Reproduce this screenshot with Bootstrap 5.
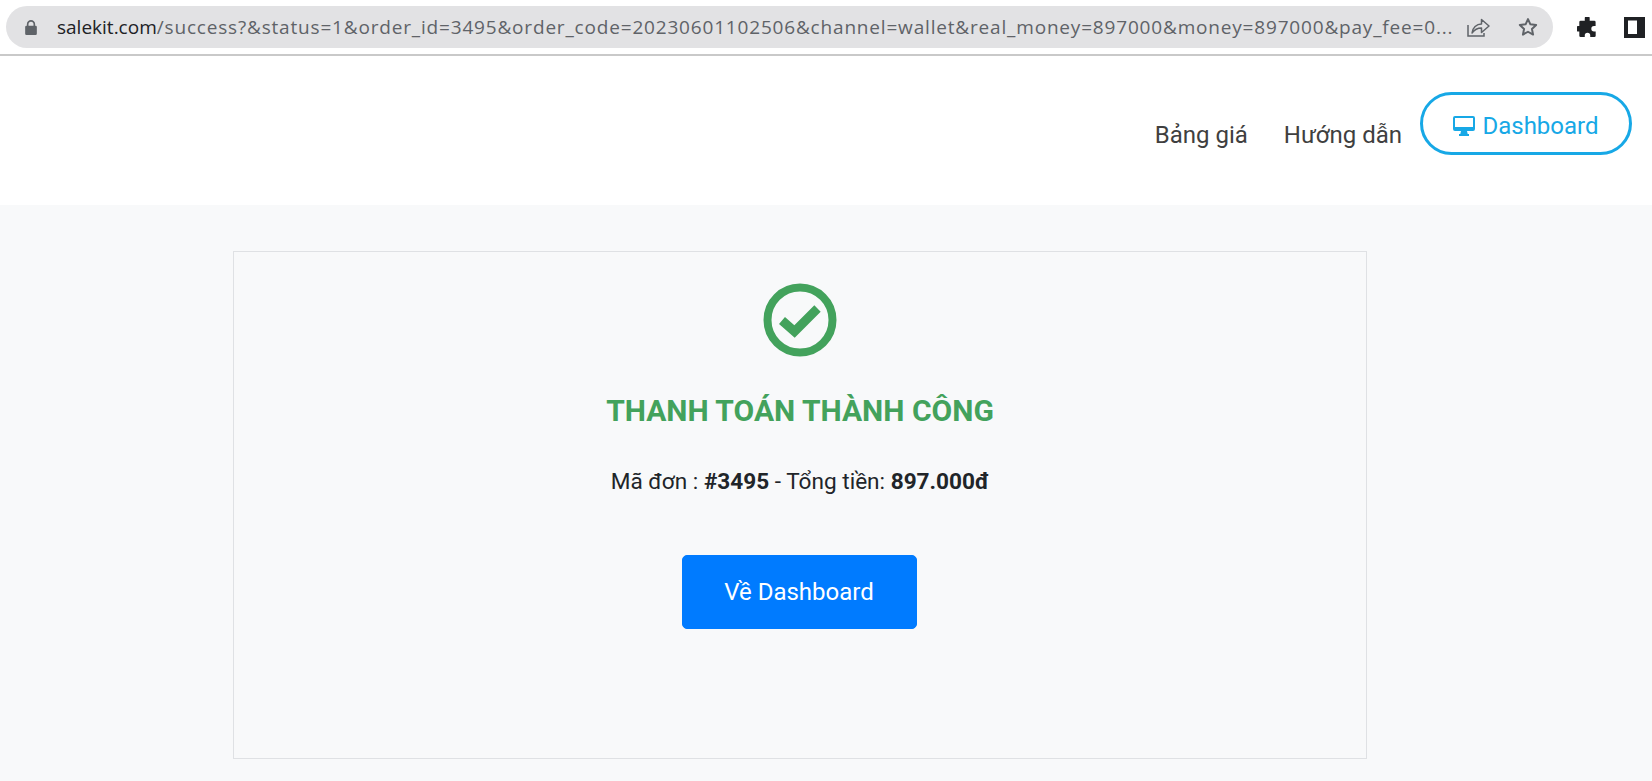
<!DOCTYPE html>
<html lang="vi">

<head>
  <title>Thanh toán thành công</title>
  <meta charset="UTF-8">
  <link href="https://cdn.jsdelivr.net/npm/bootstrap@5.3.3/dist/css/bootstrap.min.css" rel="stylesheet">
  <style>
    html, body { height: 100%; }
    body { font-family: Roboto, "Liberation Sans", sans-serif; background: #f8f9fa; color: #212529; overflow: hidden; }

    /* browser chrome */
    .chrome-bar { height: 56px; background: #fff; border-bottom: 2px solid #c9c9c9; padding: 6px 0 0 6px; }
    .url-pill { width: 1547px; height: 42px; background: #e2e2e4; border-radius: 21px; padding: 0 16px 0 19px; }
    .url-text { font-family: "Open Sans", "Noto Sans", sans-serif; font-size: 19px; letter-spacing: .82px; color: #5f6368; white-space: nowrap; overflow: hidden; width: 1400px; margin-left: 20px; }
    .url-text b { font-weight: 400; color: #202124; letter-spacing: 0; }
    .share-ico { margin-left: 10px; }
    .star-ico { margin-left: 28px; }
    .ext-icons { gap: 26px; margin-left: 24px; }

    /* site header */
    .site-head { height: 149px; background: #fff; padding: 36px 20px 0 0; }
    .site-link { font-size: 24px; color: #3f3f3f; text-decoration: none; margin-top: 23px; }
    .gap-link { margin-right: 36px; }
    .pill-btn { width: 212px; height: 63px; border: 3px solid #17a8e6; border-radius: 32px; color: #17a8e6; font-size: 24px; background: #fff; gap: 7px; text-decoration: none; margin-left: 18px; padding-top: 4px; }

    /* result panel */
    .result-wrap { padding-top: 46px; }
    .result-panel { width: 1134px; height: 508px; margin-left: 233px; border: 1px solid #dfe1e4; padding-top: 31px; background: #f8f9fa; border-radius: 0; }
    .result-title { font-size: 30px; font-weight: 700; color: #43a25c; margin: 34px 0 0; line-height: 40px; }
    .result-line { font-size: 22.6px; margin: 35px 0 0; line-height: 32px; }
    .result-line b { font-weight: 700; }
    .back-btn { width: 235px; height: 74px; margin-top: 57px; margin-right: 2px; font-size: 24px; background: #007bff; border-color: #007bff; border-radius: 5px; }
  </style>
</head>

<body>
  <div class="chrome-bar d-flex align-items-start">
    <div class="url-pill d-flex align-items-center">
      <svg class="flex-shrink-0" width="12" height="15" viewBox="0 0 14 18" fill="#5f6368"><path d="M2 7V5a5 5 0 0 1 10 0v2h.5A1.500 1.500 0 0 1 14 8.500v8a1.500 1.500 0 0 1-1.500 1.500h-11A1.500 1.500 0 0 1 0 16.500v-8A1.500 1.500 0 0 1 1.500 7zm2 0h6V5a3 3 0 0 0-6 0z"/></svg>
      <div class="url-text flex-shrink-0"><b>salekit.com</b>/success?&amp;status=1&amp;order_id=3495&amp;order_code=20230601102506&amp;channel=wallet&amp;real_money=897000&amp;money=897000&amp;pay_fee=0...</div>
      <svg class="share-ico flex-shrink-0" width="23" height="20" viewBox="0 0 23 20" fill="none" stroke="#5f6368" stroke-width="1.500"><path d="M1 8v11h16v-3"/><path d="M5 16c.6-5.500 4.500-9 9.500-9V2.500L22 9l-7.500 6.500V11c-4 0-7 1.500-9.500 5z" stroke-linejoin="round"/></svg>
      <svg class="star-ico flex-shrink-0" width="20" height="20" viewBox="0 0 24 24" fill="none" stroke="#5f6368" stroke-width="2.400" stroke-linejoin="round"><path d="M12 2.500l2.900 6.300 6.900.8-5.100 4.700 1.400 6.800L12 17.700l-6.100 3.400 1.400-6.800-5.100-4.700 6.900-.8z"/></svg>
    </div>
    <div class="ext-icons d-flex align-items-center" style="height:42px">
      <svg width="21" height="20" viewBox="0 0 22 22" fill="#1f2124"><path d="M8 1.500a2.700 2.700 0 0 1 5.400 0V4h5a1.500 1.500 0 0 1 1.500 1.500V10h-1.700a3 3 0 0 0 0 6H20v4.500a1.500 1.500 0 0 1-1.500 1.500H14v-1.800a3 3 0 0 0-6 0V22H3.500A1.500 1.500 0 0 1 2 20.500V16H.8a3 3 0 0 1 0-6H2V5.500A1.500 1.500 0 0 1 3.500 4H8z"/></svg>
      <svg width="21" height="21" viewBox="0 0 21 21"><path fill="#1f2124" d="M0 0h21v21H0z"/><path fill="#fff" d="M4 3.500h9V17H4z"/></svg>
    </div>
  </div>

  <header class="site-head d-flex justify-content-end align-items-start">
    <nav class="d-flex align-items-center">
      <a class="site-link gap-link" href="#">Bảng giá</a>
      <a class="site-link" href="#">Hướng dẫn</a>
      <a class="pill-btn d-inline-flex align-items-center justify-content-center" href="#">
        <svg width="22" height="20" viewBox="0 0 22 20" fill="#17a8e6"><path fill-rule="evenodd" d="M2 0h18a2 2 0 0 1 2 2v11a2 2 0 0 1-2 2h-6l.7 3H16v2H6v-2h1.300l.7-3H2a2 2 0 0 1-2-2V2a2 2 0 0 1 2-2zm0 2v9h18V2z"/></svg>
        Dashboard
      </a>
    </nav>
  </header>

  <main class="result-wrap">
    <div class="card result-panel text-center align-items-center">
      <svg width="74" height="74" viewBox="0 0 74 74"><circle cx="37" cy="37" r="32.500" fill="none" stroke="#43a25c" stroke-width="8"/><path d="M19 37.500l12.500 11L54.500 25.500" fill="none" stroke="#43a25c" stroke-width="9"/></svg>
      <h2 class="result-title">THANH TOÁN THÀNH CÔNG</h2>
      <p class="result-line">Mã đơn : <b>#3495</b> - Tổng tiền: <b>897.000đ</b></p>
      <a class="btn btn-primary back-btn d-flex align-items-center justify-content-center" href="#">Về Dashboard</a>
    </div>
  </main>
</body>

</html>
